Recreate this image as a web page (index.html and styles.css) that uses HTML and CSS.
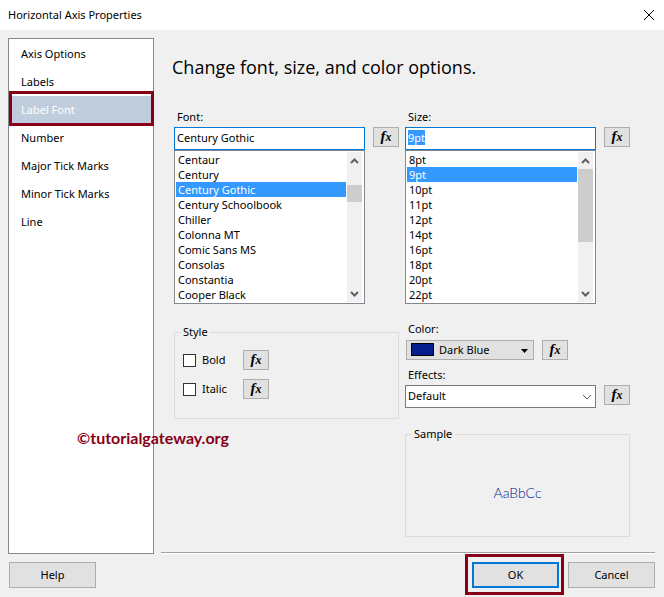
FILE: index.html
```html
<!DOCTYPE html>
<html lang="en">
<head>
<meta charset="utf-8">
<title>Horizontal Axis Properties</title>
<link rel="stylesheet" href="styles.css">
</head>
<body>
<div class="dialog">
  <header class="titlebar">
    <h1 class="title">Horizontal Axis Properties</h1>
    <button class="close" type="button" aria-label="Close">
      <svg width="12" height="12" viewBox="0 0 12 12"><path d="M1 1L11 11M11 1L1 11"/></svg>
    </button>
  </header>

  <div class="body">
    <nav class="pages">
      <a class="page" href="#axis-options">Axis Options</a>
      <a class="page" href="#labels">Labels</a>
      <a class="page current" href="#label-font" aria-current="page">Label Font</a>
      <a class="page" href="#number">Number</a>
      <a class="page" href="#major">Major Tick Marks</a>
      <a class="page" href="#minor">Minor Tick Marks</a>
      <a class="page" href="#line">Line</a>
      <span class="watermark">©tutorialgateway.org</span>
    </nav>

    <main class="content">
      <h2 class="heading">Change font, size, and color options.</h2>
      <div class="columns">
        <section class="column">
          <label class="label" for="font">Font:</label>
          <div class="row">
            <div class="combo">
              <input class="text" id="font" type="text" value="Century Gothic">
              <div class="listbox">
                <select class="list" size="10" aria-label="Font list">
                  <option>Centaur</option>
                  <option>Century</option>
                  <option selected>Century Gothic</option>
                  <option>Century Schoolbook</option>
                  <option>Chiller</option>
                  <option>Colonna MT</option>
                  <option>Comic Sans MS</option>
                  <option>Consolas</option>
                  <option>Constantia</option>
                  <option>Cooper Black</option>
                </select>
                <div class="scroll" aria-hidden="true">
                  <svg class="arrow" width="15" height="17" viewBox="0 0 15 17"><path d="M4 11L7.500 7.500L11 11"/></svg>
                  <span class="track"><span class="thumb thumb-font"></span></span>
                  <svg class="arrow" width="15" height="17" viewBox="0 0 15 17"><path d="M4 7L7.500 10.500L11 7"/></svg>
                </div>
              </div>
            </div>
            <button class="fx" type="button" aria-label="Font expression"><span class="f">f</span><span class="x">x</span></button>
          </div>
          <fieldset class="group style-group">
            <legend>Style</legend>
            <div class="check-row">
              <input class="check" id="bold" type="checkbox"><label class="check-label" for="bold">Bold</label>
              <button class="fx" type="button" aria-label="Bold expression"><span class="f">f</span><span class="x">x</span></button>
            </div>
            <div class="check-row">
              <input class="check" id="italic" type="checkbox"><label class="check-label" for="italic">Italic</label>
              <button class="fx" type="button" aria-label="Italic expression"><span class="f">f</span><span class="x">x</span></button>
            </div>
          </fieldset>
        </section>

        <section class="column">
          <label class="label" for="size">Size:</label>
          <div class="row">
            <div class="combo">
              <input class="text" id="size" type="text" value="9pt">
              <div class="listbox">
                <select class="list" size="10" aria-label="Size list">
                  <option>8pt</option>
                  <option selected>9pt</option>
                  <option>10pt</option>
                  <option>11pt</option>
                  <option>12pt</option>
                  <option>14pt</option>
                  <option>16pt</option>
                  <option>18pt</option>
                  <option>20pt</option>
                  <option>22pt</option>
                </select>
                <div class="scroll" aria-hidden="true">
                  <svg class="arrow" width="15" height="17" viewBox="0 0 15 17"><path d="M4 11L7.500 7.500L11 11"/></svg>
                  <span class="track"><span class="thumb thumb-size"></span></span>
                  <svg class="arrow" width="15" height="17" viewBox="0 0 15 17"><path d="M4 7L7.500 10.500L11 7"/></svg>
                </div>
              </div>
            </div>
            <button class="fx" type="button" aria-label="Size expression"><span class="f">f</span><span class="x">x</span></button>
          </div>

          <label class="label color-label" for="color">Color:</label>
          <div class="row color-row">
            <div class="picker">
              <select class="color" id="color"><option>Dark Blue</option></select>
              <span class="swatch"></span>
              <svg class="caret" width="7" height="4" viewBox="0 0 7 4"><path d="M0 0H7L3.500 4Z"/></svg>
            </div>
            <button class="fx" type="button" aria-label="Color expression"><span class="f">f</span><span class="x">x</span></button>
          </div>

          <label class="label effects-label" for="effects">Effects:</label>
          <div class="row">
            <div class="picker wide">
              <select class="effects" id="effects"><option>Default</option></select>
              <svg class="chevron" width="10" height="6" viewBox="0 0 10 6"><path d="M1 1L5 5L9 1"/></svg>
            </div>
            <button class="fx" type="button" aria-label="Effects expression"><span class="f">f</span><span class="x">x</span></button>
          </div>

          <fieldset class="group sample-group">
            <legend>Sample</legend>
            <span class="sample">AaBbCc</span>
          </fieldset>
        </section>
      </div>
    </main>
  </div>

  <footer class="footer">
    <button class="button" type="button">Help</button>
    <span class="marked"><button class="button primary" type="button">OK</button></span>
    <button class="button" type="button">Cancel</button>
  </footer>
</div>
<script>
  const size = document.getElementById("size");
  size.focus();
  size.select();
</script>
</body>
</html>
```

FILE: styles.css
```css
* { box-sizing: border-box; }

body {
  margin: 0;
  background: #f0f0f0;
  color: #000;
  font: 11px/16px "Noto Sans", "Open Sans", sans-serif;
}

button, input, select { font: inherit; color: inherit; margin: 0; border-radius: 0; }
*:focus { outline: none; }
::selection { background: #3399ff; color: #fff; }

.dialog { display: flex; flex-direction: column; min-height: 100vh; }

.titlebar {
  display: flex;
  align-items: center;
  justify-content: space-between;
  height: 30px;
  padding: 0 9px 1px 8px;
  background: #fff;
}
.title { margin: 0; font-size: 11px; font-weight: 400; }
.close { display: flex; padding: 0; border: 0; background: none; }
.close path { stroke: #000; fill: none; }

.body { display: flex; flex: 1; padding: 8px 9px 0 8px; }

.pages {
  position: relative;
  display: flex;
  flex-direction: column;
  flex: 0 0 146px;
  padding-top: 1px;
  border: 1px solid #828790;
  background: #fff;
}
.page {
  height: 28px;
  padding-left: 12px;
  color: #000;
  line-height: 28px;
  text-decoration: none;
}
.current {
  height: 35px;
  margin: -5px -1px -2px 0;
  padding-left: 9px;
  border: 3px solid #880015;
  box-shadow: inset 0 2px #fff;
  background: #c0cddd;
  color: #fff;
  line-height: 31px;
}
.watermark {
  position: absolute;
  left: 68px;
  top: 389px;
  color: #880015;
  font: bold 16px/20px Lato, sans-serif;
}

.content {
  flex: 1;
  margin: 0 0 1px 7px;
  padding: 0 25px 0 13px;
  border-bottom: 1px solid #a0a0a0;
  box-shadow: 0 1px #fff;
}
.heading { margin: 17px -2px 29px; font-family: "Open Sans", sans-serif; font-size: 18px; line-height: 24px; font-weight: 400; }

.columns { display: flex; gap: 6px; }
.column { flex: 1; min-width: 0; }
.label { display: block; height: 19px; padding-left: 3px; line-height: 18px; }
.row { display: flex; align-items: flex-start; gap: 8px; }
.combo { flex: 1; min-width: 0; }

.text {
  display: block;
  width: 100%;
  height: 23px;
  padding: 0 2px 2px;
  border: 1px solid #0078d7;
  background: #fff;
}
.listbox {
  display: flex;
  padding: 1px 2px 1px 1px;
  border: 1px solid #828790;
  background: #fff;
}
.list {
  flex: 1;
  min-width: 0;
  height: 150px;
  padding: 0;
  border: 0;
  background: #fff;
  overflow: hidden;
  scrollbar-width: none;
}
.list option { height: 15px; min-height: 0; padding: 0 2px; line-height: 15px; }
.list option:checked {
  background: linear-gradient(#3399ff, #3399ff);
  -webkit-text-fill-color: #fff;
}
.scroll { display: flex; flex-direction: column; width: 15px; margin-left: 1px; background: #f0f0f0; }
.arrow path { fill: none; stroke: #606060; stroke-width: 2; }
.track { flex: 1; }
.thumb { display: block; background: #cdcdcd; }
.thumb-font { height: 17px; margin-top: 16px; }
.thumb-size { height: 73px; }

.fx {
  display: flex;
  flex: 0 0 26px;
  align-items: baseline;
  justify-content: center;
  height: 20px;
  padding: 0;
  border: 1px solid #adadad;
  background: #e1e1e1;
  font: italic bold 15px/16px "Liberation Serif", serif;
}
.x { font-size: 12px; }

.group { min-width: 0; margin: 0; border: 1px solid #dcdcdc; }
.group legend { padding: 0 2px; line-height: 16px; }
.style-group { height: 95px; margin-top: 20px; padding: 10px 6px 0; }
.check-row { display: flex; align-items: center; height: 20px; margin-bottom: 9px; padding-left: 2px; }
.check {
  appearance: none;
  width: 13px;
  height: 13px;
  border: 1px solid #333;
  background: #fff;
}
.check-label { width: 47px; padding-left: 6px; }

.color-label { height: 20px; margin-top: 16px; }
.color-row { padding-left: 1px; }
.picker { position: relative; flex: 0 0 128px; }
.wide { flex: 1; }
.color, .effects { display: block; appearance: none; width: 100%; }
.color { height: 20px; padding: 0 20px 0 32px; border: 1px solid #adadad; background: #e1e1e1; }
.swatch { position: absolute; left: 5px; top: 3px; width: 23px; height: 13px; border: 1px solid #000; background: #061f8c; }
.caret { position: absolute; right: 6px; top: 9px; }
.effects-label { margin-top: 6px; }
.effects { height: 23px; padding: 0 20px 2px 2px; border: 1px solid #7a7a7a; background: #fff; }
.chevron { position: absolute; right: 4px; top: 9px; }
.chevron path { fill: none; stroke: #606060; }

.sample-group {
  height: 111px;
  margin-top: 18px;
  padding: 0 6px;
}
.sample { display: block; padding-top: 43px; color: #00208c; font: 300 14px/16px Lato, sans-serif; text-align: center; }

.footer { display: flex; align-items: flex-start; gap: 4px; height: 43px; padding: 0 9px; }
.button { width: 87px; height: 26px; margin-top: 8px; padding: 0; border: 1px solid #adadad; background: #e1e1e1; }
.marked { display: flex; margin-left: auto; padding: 5px 2px 4px 4px; border: 3px solid #880015; }
.primary { margin-top: 0; border: 2px solid #0078d7; }
```
